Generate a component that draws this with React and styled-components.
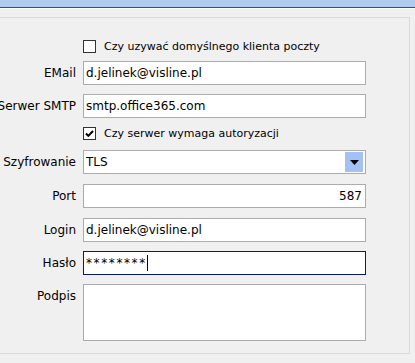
import React from "react";
import styled, { createGlobalStyle } from "styled-components";

const GlobalStyle = createGlobalStyle`
    html, body {
        margin: 0;
        padding: 0;
        background: #f0f0f0;
        font-family: "DejaVu Sans", Tahoma, sans-serif;
        font-size: 12px;
        color: #000;
        overflow: hidden;
    }
`;

const App = () => {
    return (
        <>
            <GlobalStyle />
            <Pagina>
                <Encabezado />
                <Panel>
                    <Fila top={19}>
                        <Etiqueta />
                        <Casilla label="Czy uzywać domyślnego klienta poczty" />
                    </Fila>
                    <Fila top={6} alto={24}>
                        <Etiqueta>EMail</Etiqueta>
                        <Campo>d.jelinek@visline.pl</Campo>
                    </Fila>
                    <Fila top={9} alto={24}>
                        <Etiqueta>Serwer SMTP</Etiqueta>
                        <Campo>smtp.office365.com</Campo>
                    </Fila>
                    <Fila top={6}>
                        <Etiqueta />
                        <Casilla checked label="Czy serwer wymaga autoryzacji" />
                    </Fila>
                    <Fila top={8} alto={24}>
                        <Etiqueta>Szyfrowanie</Etiqueta>
                        <Campo>
                            <Texto>TLS</Texto>
                            <BotonLista>
                                <svg width="9" height="5" viewBox="0 0 9 5">
                                    <path d="M0 0h9L4.5 5z" fill="#000" />
                                </svg>
                            </BotonLista>
                        </Campo>
                    </Fila>
                    <Fila top={10} alto={24}>
                        <Etiqueta>Port</Etiqueta>
                        <Campo derecha>587</Campo>
                    </Fila>
                    <Fila top={10} alto={24}>
                        <Etiqueta>Login</Etiqueta>
                        <Campo>d.jelinek@visline.pl</Campo>
                    </Fila>
                    <Fila top={9} alto={24}>
                        <Etiqueta>Hasło</Etiqueta>
                        <Campo activo>
                            <Asteriscos>********</Asteriscos>
                            <Cursor />
                        </Campo>
                    </Fila>
                    <Fila top={9} alto={57} arriba>
                        <Etiqueta arriba>Podpis</Etiqueta>
                        <Campo />
                    </Fila>
                </Panel>
            </Pagina>
        </>
    );
};

const Casilla = ({ checked, label }) => (
    <CasillaFila>
        <Caja>
            {checked && (
                <svg width="11" height="11" viewBox="0 0 11 11">
                    <path d="M2 5.5l2.3 2.4L9 3" stroke="#000" strokeWidth="2" fill="none" />
                </svg>
            )}
        </Caja>
        <span>{label}</span>
    </CasillaFila>
);

export default App;

const Pagina = styled.div`
    width: 415px;
    height: 363px;
    background: #f0f0f0;
`;

const Encabezado = styled.div`
    height: 7px;
    background: #afcbf0;
    border-bottom: 1px solid #1d52ad;
    box-shadow: 0 1px 0 #fbfbfb;
`;

const Panel = styled.div`
    margin-top: 9px;
    width: 410px;
    height: 337px;
    box-sizing: border-box;
    border: 1px solid #dadada;
    border-left: none;
    display: flex;
    flex-direction: column;
`;

const Fila = styled.div`
    display: flex;
    align-items: ${(p) => (p.arriba ? "flex-start" : "center")};
    gap: 7px;
    margin-top: ${(p) => p.top}px;
    height: ${(p) => p.alto || 18}px;
`;

const Etiqueta = styled.div`
    width: 76px;
    flex: none;
    display: flex;
    justify-content: flex-end;
    white-space: nowrap;
    padding-top: ${(p) => (p.arriba ? "5px" : "0")};
`;

const Campo = styled.div`
    width: 283px;
    height: 100%;
    box-sizing: border-box;
    background: #fff;
    border: 1px solid ${(p) => (p.activo ? "#0c1a6e" : "#acacac")};
    display: flex;
    align-items: center;
    justify-content: ${(p) => (p.derecha ? "flex-end" : "flex-start")};
    padding: 0 3px 0 2px;
    white-space: nowrap;
`;

const Texto = styled.span`
    flex: 1;
`;

const BotonLista = styled.div`
    width: 18px;
    height: 20px;
    margin-right: -1px;
    background: #a3c1f5;
    display: flex;
    align-items: center;
    justify-content: center;
`;

const Asteriscos = styled.span`
    font-size: 12px;
    letter-spacing: 1.6px;
`;

const Cursor = styled.span`
    width: 1px;
    height: 16px;
    background: #000;
`;

const CasillaFila = styled.label`
    display: flex;
    align-items: center;
    gap: 8px;
    white-space: nowrap;
    font-size: 11px;
`;

const Caja = styled.span`
    width: 13px;
    height: 13px;
    box-sizing: border-box;
    border: 1px solid #333;
    background: #fff;
    display: flex;
    align-items: center;
    justify-content: center;
`;
